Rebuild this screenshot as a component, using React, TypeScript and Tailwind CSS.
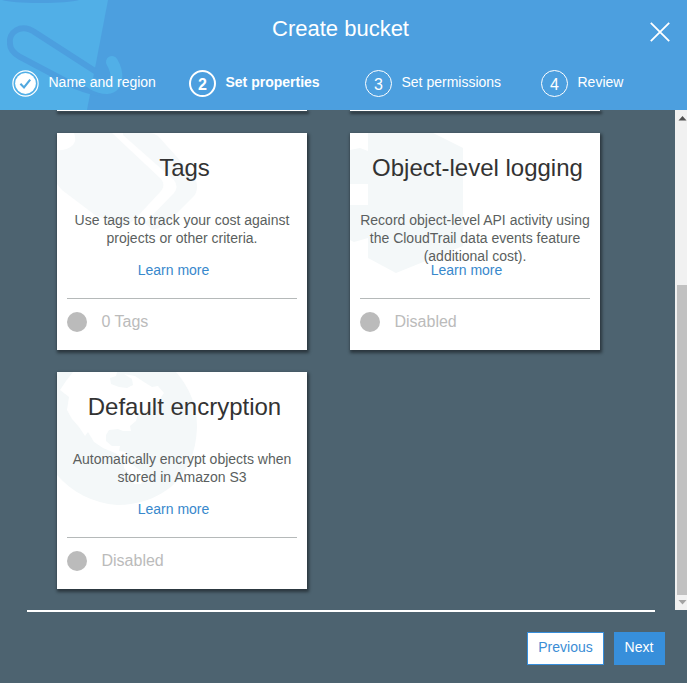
import type { ReactNode } from "react";

type CardProps = {
  title: string;
  lines: string[];
  status: string;
  art: ReactNode;
};

function PropertyCard({ title, lines, status, art }: CardProps) {
  return (
    <section className="relative flex h-[217px] flex-col bg-white px-[10px] shadow-[1px_2px_3px_1px_rgba(0,0,0,0.45)]">
      <svg className="absolute left-0 top-0" width="250" height="217" viewBox="0 0 250 217" fill="#f4f8f9" aria-hidden="true">
        {art}
      </svg>
      <h2 className="relative mt-[21px] h-[28px] whitespace-nowrap pl-[5px] text-center text-[24px] leading-[28px] text-[#333]">{title}</h2>
      <div className="relative mt-[29px] h-[50px] whitespace-nowrap text-center text-[14px] leading-[18px] text-[#5b5f60]">
        {lines.map((line) => (
          <p key={line}>{line}</p>
        ))}
      </div>
      <a className="relative pr-[17px] text-center text-[14px] leading-[18px] text-[#3888cc]">Learn more</a>
      <div className="relative mt-[19px] flex items-center border-t border-[#b5b9b9] pt-[13px]">
        <span className="h-5 w-5 rounded-full bg-[#bbb]" />
        <span className="ml-[14.5px] text-[16px] leading-5 text-[#bbb]">{status}</span>
      </div>
    </section>
  );
}

const tagArt = (
  <g fill="#f6f9fa">
    <path d="M17 0H55L104 46Q109 52 104 58L78 86Q70 94 60 92L38 82L5 57L0 51V17Q10 18 16 12Q20 7 17 0Z" />
    <path d="M66 0H92Q97 0 101 3L136 42Q140 47 140 54Q140 60 136 64L107 93L96 97L88 90L117 60Q122 54 117 47L66 2Z" />
  </g>
);

const loggingArt = (
  <>
    <path d="M18 0H83L113 15V113L46 140L18 125Z" />
    <path d="M0 17L10 15L18 18V51H0ZM0 72H18V105L4 109L0 107Z" />
  </>
);

const globeArt = (
  <>
    <path d="M0 0H119Q140 24 140 55Q139 92 115 114Q92 133 60 133Q24 130 0 103Z" />
    <path
      fill="#fff"
      d="M16 0L60 0L59 4L53 6L54 12L62 15L70 16L76 13L75 7L67 2L78 4L87 10L95 15L101 14L107 21L103 27L94 28L96 34L88 39L81 41L79 49L73 54L74 59L66 59L61 57L52 58L49 63L49 69L55 74L63 74L62 79L69 80L72 90L80 96L89 102L84 112L77 112L73 104L67 96L66 87L58 81L46 76L37 70L31 60L28 64L22 55L15 47L10 38L12 25L3 18L9 9Z"
    />
  </>
);

function Step({ number, label, active, done, className }: { number: number; label: string; active?: boolean; done?: boolean; className: string }) {
  return (
    <li className={`flex items-center ${className}`}>
      {done ? (
        <svg width="27" height="27" viewBox="0 0 27 27" fill="none" aria-hidden="true">
          <circle cx="13.5" cy="13.5" r="12.6" stroke="white" strokeWidth="1.2" />
          <circle cx="13.5" cy="13.5" r="10.4" fill="white" />
          <path d="M8.4 13.8L12 17.5L18.2 9.7" stroke="#51a8df" strokeWidth="2.1" />
        </svg>
      ) : (
        <span className={`flex h-[27px] w-[27px] items-center justify-center rounded-full border-white text-[16px] leading-none ${active ? "border-2 font-bold" : "border"}`}>
          <span className="pt-[3px]">{number}</span>
        </span>
      )}
      <span className={`ml-[9.5px] whitespace-nowrap pb-1 text-[14px] leading-4 ${active ? "font-bold" : ""}`}>{label}</span>
    </li>
  );
}

export default function App() {
  return (
    <main className="flex h-[683px] w-[687px] flex-col overflow-hidden bg-[#4d6370] font-['Liberation_Sans',Arial,sans-serif]">
      <header className="relative z-10 h-[110px] shrink-0 overflow-hidden bg-[#4c9fdf] text-white">
        <svg className="absolute left-0 top-0" width="140" height="110" viewBox="0 0 140 110" fill="none" aria-hidden="true">
          <path d="M0 0H108L87 110H0Z" fill="#51afe7" />
          <path d="M2 0H79Q69 3 40 3Q12 3 2 0Z" fill="#4c9fdf" />
          <path d="M98 73L36 33C20 22 8 33 10 44C10 50 15 54 20 57L75 86Q90 92 100 93" stroke="#4c9fdf" strokeWidth="6" />
          <path d="M112 62C118 72 119 87 107 88Q100 88 93 84" stroke="#51afe7" strokeWidth="12" strokeLinecap="round" />
        </svg>
        <div className="relative flex h-[57px] justify-center pt-4">
          <h1 className="mr-[6px] text-[22px] leading-[26px]">Create bucket</h1>
          <svg className="absolute left-[650px] top-[22px]" width="20" height="20" viewBox="0 0 20 20" fill="none" stroke="white" strokeWidth="1.8" role="img" aria-label="Close">
            <path d="M.8.8L19.2 19.2M19.2.8L.8 19.2" />
          </svg>
        </div>
        <ol className="relative flex pt-[13px]">
          <Step number={1} label="Name and region" done className="ml-3 w-[177px]" />
          <Step number={2} label="Set properties" active className="w-[176px]" />
          <Step number={3} label="Set permissions" className="w-[176px]" />
          <Step number={4} label="Review" className="" />
        </ol>
      </header>
      <div className="flex h-[500px] shrink-0">
        <div className="grid flex-1 grid-cols-[250px_250px] content-start gap-x-[43px] gap-y-[22px] pl-[57px]">
          <div className="h-px bg-white shadow-[1px_2px_3px_1px_rgba(0,0,0,0.45)]" />
          <div className="h-px bg-white shadow-[1px_2px_3px_1px_rgba(0,0,0,0.45)]" />
          <PropertyCard title="Tags" lines={["Use tags to track your cost against", "projects or other criteria."]} status="0 Tags" art={tagArt} />
          <PropertyCard title="Object-level logging" lines={["Record object-level API activity using", "the CloudTrail data events feature", "(additional cost)."]} status="Disabled" art={loggingArt} />
          <PropertyCard title="Default encryption" lines={["Automatically encrypt objects when", "stored in Amazon S3"]} status="Disabled" art={globeArt} />
        </div>
        <div className="flex w-3 flex-col items-end bg-[#f1f1f1]">
          <svg width="12" height="175" viewBox="0 0 12 175" aria-hidden="true">
            <path d="M3.5 10.5L7.5 6L11.5 10.5Z" fill="#505050" />
          </svg>
          <div className="h-[310px] w-[10px] bg-[#c1c1c1]" />
          <svg width="12" height="15" viewBox="0 0 12 15" aria-hidden="true">
            <path d="M3.5 5L7.5 9.5L11.5 5Z" fill="#a3a3a3" />
          </svg>
        </div>
      </div>
      <footer className="flex flex-1 flex-col">
        <div className="ml-[27px] h-[2px] w-[628px] bg-white" />
        <div className="mr-[22px] mt-5 flex justify-end gap-[10px] text-[14px] leading-4">
          <button className="h-[33px] w-[77px] border border-[#378edb] bg-white pb-[3px] text-[#3b8dd5]">Previous</button>
          <button className="h-[33px] w-[51px] bg-[#378fdb] pb-[3px] pr-px text-white">Next</button>
        </div>
      </footer>
    </main>
  );
}
